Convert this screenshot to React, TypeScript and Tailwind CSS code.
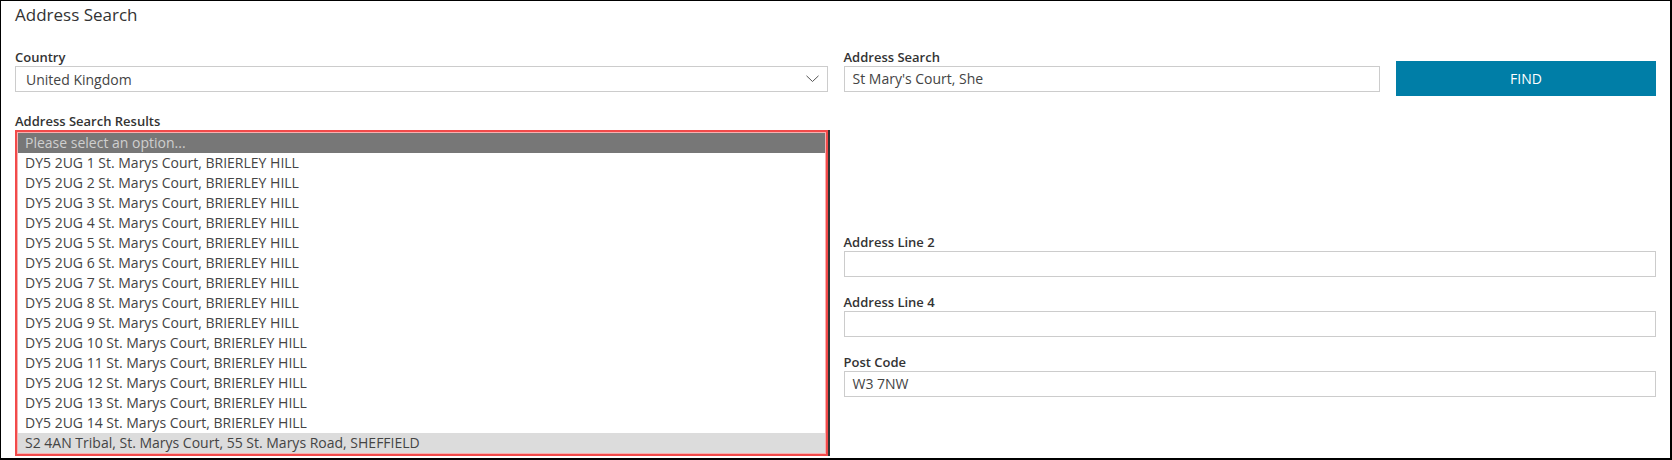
import React from "react";

const rows: string[] = [
  ...Array.from({ length: 14 }, (_, i) => `DY5 2UG ${i + 1} St. Marys Court, BRIERLEY HILL`),
  "S2 4AN Tribal, St. Marys Court, 55 St. Marys Road, SHEFFIELD",
];

function Label({ children }: { children: React.ReactNode }) {
  return (
    <div className="text-[13px] leading-4 font-semibold text-[#333] mb-px">{children}</div>
  );
}

function TextBox({ value }: { value?: string }) {
  return (
    <div className="h-[26px] border border-[#cccccc] bg-white pl-[8px] text-[14px] leading-[24px] text-[#444]">
      {value}
    </div>
  );
}

export default function App() {
  return (
    <div
      className="w-full h-[460px] bg-white border-l border-t border-r-2 border-b-2 border-black px-[14px] overflow-hidden"
      style={{ fontFamily: '"Open Sans", "Noto Sans", sans-serif' }}
    >
      <div className="pt-[3px] text-[17px] leading-[22px] text-[#333]">Address Search</div>

      <div className="mt-[23px] grid grid-cols-2 gap-x-4">
        {/* Left column */}
        <div className="flex flex-col">
          <Label>Country</Label>
          <div className="h-[26px] border border-[#cccccc] bg-white pl-[10px] pr-[8px] flex items-center justify-between text-[14px] text-[#444]">
            <span>United Kingdom</span>
            <svg width="13" height="8" viewBox="0 0 13 8" fill="none">
              <polyline points="0.5,0.8 6.5,6.5 12.5,0.8" stroke="#555" strokeWidth="1" />
            </svg>
          </div>

          <div className="mt-[21px]">
            <Label>Address Search Results</Label>
            <div className="border-2 border-[#f24a4a] bg-[#f7b0b0] p-px shadow-[2px_0_0_#333]">
              <div className="bg-white">
                <div className="h-5 leading-5 px-[7px] text-[14px] bg-[#777777] text-[#cfcfcf]">
                  Please select an option...
                </div>
                {rows.map((r, i) => (
                  <div
                    key={i}
                    className={`h-5 leading-5 px-[7px] text-[14px] text-[#444] ${
                      i === rows.length - 1 ? "bg-[#dcdcdc]" : "bg-white"
                    }`}
                  >
                    {r}
                  </div>
                ))}
              </div>
            </div>
          </div>
        </div>

        {/* Right column */}
        <div className="flex flex-col">
          <div className="flex items-start gap-4">
            <div className="flex-1">
              <Label>Address Search</Label>
              <TextBox value="St Mary's Court, She" />
            </div>
            <button className="mt-[12px] w-[260px] h-[35px] bg-[#007ea7] text-white text-[14px] leading-[35px] text-center">
              FIND
            </button>
          </div>

          <div className="mt-[138px]">
            <Label>Address Line 2</Label>
            <TextBox />
          </div>
          <div className="mt-[17px]">
            <Label>Address Line 4</Label>
            <TextBox />
          </div>
          <div className="mt-[17px]">
            <Label>Post Code</Label>
            <TextBox value="W3 7NW" />
          </div>
        </div>
      </div>
    </div>
  );
}
